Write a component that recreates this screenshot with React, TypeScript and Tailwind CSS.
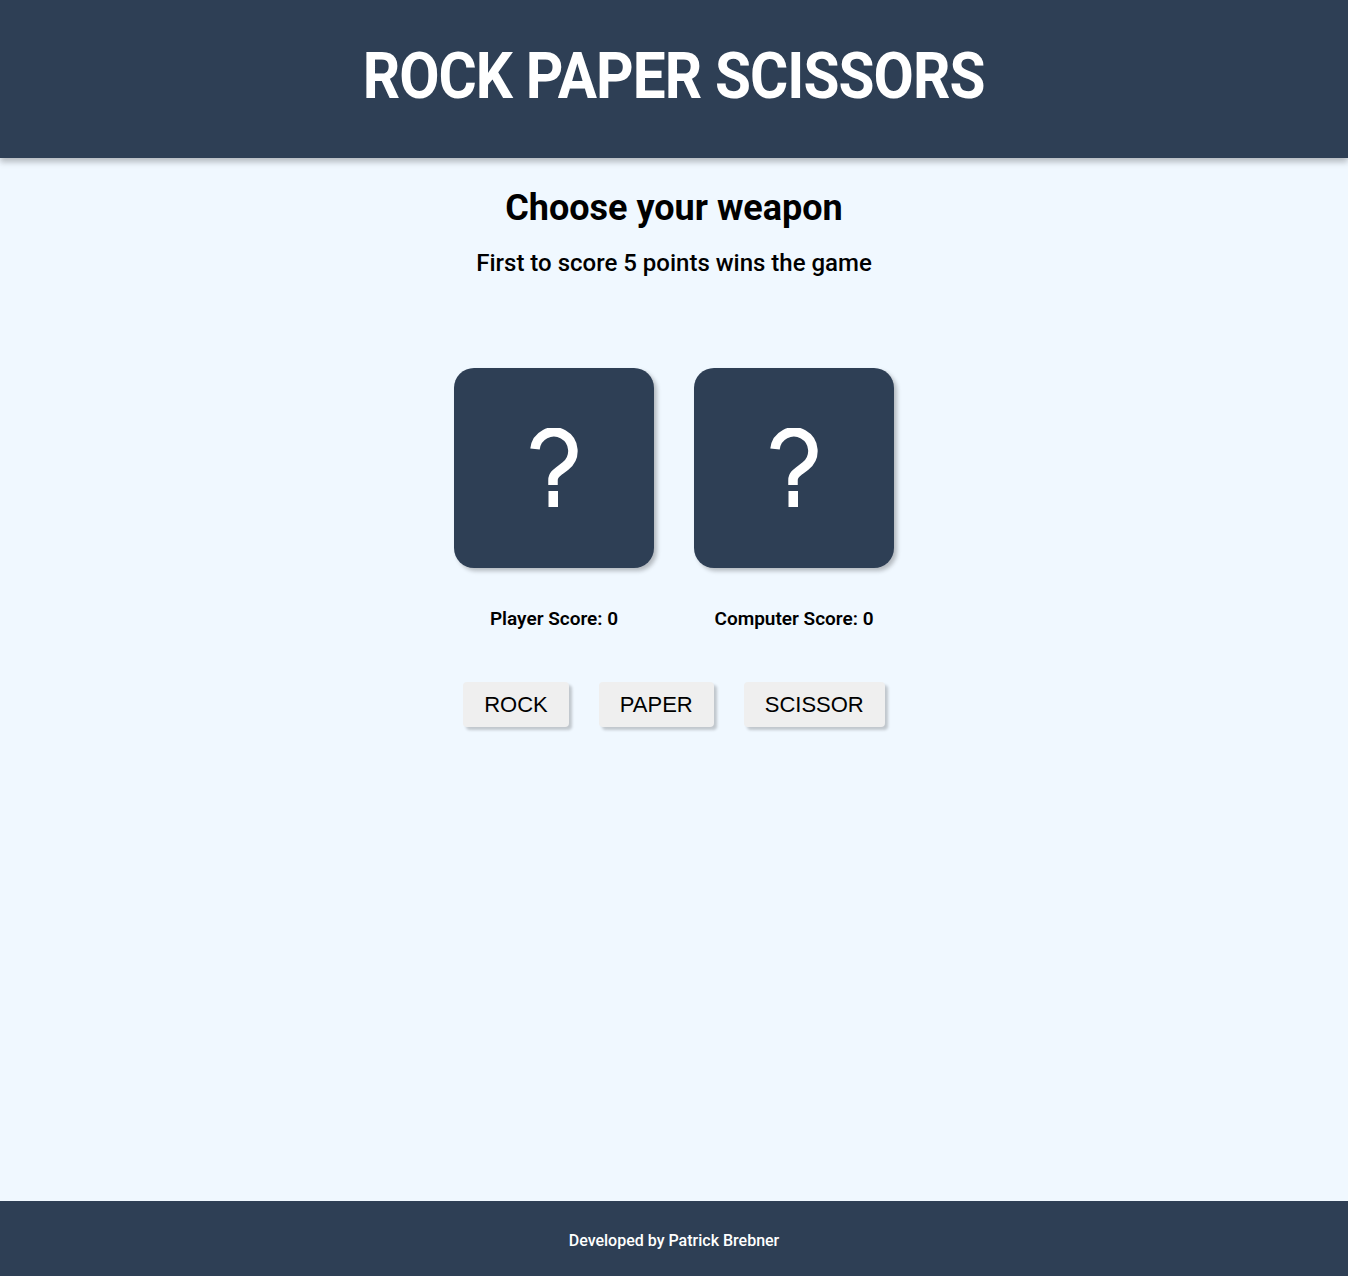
const buttons = ["ROCK", "PAPER", "SCISSOR"];

function Card() {
  return (
    <div className="w-[200px] h-[200px] rounded-[20px] bg-[#2e3f55] shadow-[3px_3px_4px_rgba(0,0,0,0.25)] flex items-center justify-center">
      <svg width="48" height="80" viewBox="0 0 48 80" className="mt-[-1px]">
        <path
          d="M5 21 A19 19 0 1 1 35.5 38 C 28 44 23 46 23 52 L 23 57"
          fill="none"
          stroke="white"
          strokeWidth="9.5"
        />
        <rect x="18.5" y="63" width="9.5" height="16" fill="white" />
      </svg>
    </div>
  );
}

export default function App() {
  return (
    <div className="min-h-screen flex flex-col bg-[#f0f8ff] font-['Roboto',sans-serif] text-black">
      <header className="h-[158px] bg-[#2e3f55] flex items-center justify-center shadow-[0_4px_6px_rgba(0,0,0,0.25)] relative z-10">
        <h1 className="inline-block text-white text-[64px] font-bold tracking-[-1px] leading-none -mt-[4px] scale-x-[0.913]">
          ROCK PAPER SCISSORS
        </h1>
      </header>
      <main className="flex-1 flex flex-col items-center">
        <h2 className="mt-[28px] text-[36px] font-bold leading-[44px]">Choose your weapon</h2>
        <p className="mt-[17px] text-[24px] font-medium leading-[32px]">First to score 5 points wins the game</p>
        <div className="mt-[89px] flex gap-[40px]">
          <div className="flex flex-col items-center">
            <Card />
            <div className="mt-[39px] text-[19px] font-semibold leading-[24px]">Player Score: 0</div>
          </div>
          <div className="flex flex-col items-center">
            <Card />
            <div className="mt-[39px] text-[19px] font-semibold leading-[24px]">Computer Score: 0</div>
          </div>
        </div>
        <div className="mt-[51px] flex gap-[30px]">
          {buttons.map((b) => (
            <button
              key={b}
              className="h-[45px] px-[21px] rounded-[4px] bg-[#efefef] shadow-[3px_3px_3px_rgba(0,0,0,0.2)] text-[22px] font-['Liberation_Sans',Arial,sans-serif] text-black"
            >
              {b}
            </button>
          ))}
        </div>
      </main>
      <footer className="h-[75px] bg-[#2e3f55] flex items-center justify-center pt-[5px]">
        <span className="text-white text-[16px] font-medium">Developed by Patrick Brebner</span>
      </footer>
    </div>
  );
}
